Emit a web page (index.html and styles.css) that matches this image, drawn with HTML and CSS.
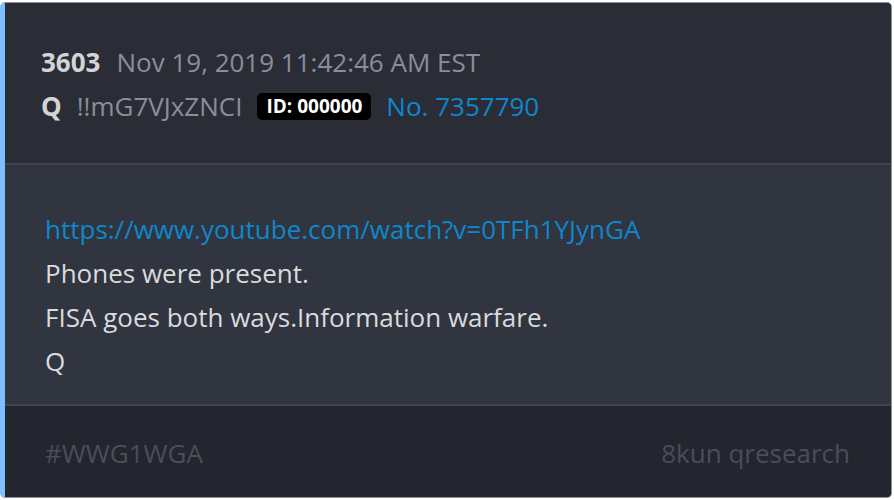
FILE: index.html
```html
<!DOCTYPE html>
<html lang="en">

<head>
    <meta charset="UTF-8">
    <meta name="viewport" content="width=device-width, initial-scale=1.0">
    <title>Post 3603</title>
    <link rel="stylesheet" href="styles.css">
</head>

<body>
    <div class="post">
        <div class="post-head">
            <p class="meta">
                <span class="num">3603</span>
                <span class="date">Nov 19, 2019 11:42:46 AM EST</span>
            </p>
            <p class="meta author">
                <span class="name">Q</span>
                <span class="trip">!!mG7VJxZNCI</span>
                <span class="badge">ID: 000000</span>
                <a class="link" href="#">No. 7357790</a>
            </p>
        </div>
        <div class="post-body">
            <p><a class="link" href="#">https://www.youtube.com/watch?v=0TFh1YJynGA</a></p>
            <p>Phones were present.</p>
            <p>FISA goes both ways.Information warfare.</p>
            <p>Q</p>
        </div>
        <div class="post-foot">
            <span>#WWG1WGA</span>
            <span>8kun qresearch</span>
        </div>
    </div>
</body>

</html>
```

FILE: styles.css
```css
* {
    padding: 0;
    margin: 0;
    box-sizing: border-box;
}

body {
    background-color: #ffffff;
    font-family: "Open Sans", "Noto Sans", sans-serif;
    width: 894px;
    height: 500px;
    padding: 2px 2px 2px 0;
}

.post {
    height: 496px;
    display: flex;
    flex-direction: column;
    border: 1px solid #8c9099;
    border-left: 5px solid #7fbfff;
    border-radius: 5px;
    overflow: hidden;
    background-color: #23262e;
}

.post-head {
    background-color: #2a2d36;
    padding: 37px 36px 33px;
    height: 162px;
    border-bottom: 2px solid #3f434c;
}

.meta {
    display: flex;
    align-items: center;
    gap: 16px;
    line-height: 44px;
    font-size: 26px;
}

.author {
    gap: 15px;
}

.num,
.name {
    font-weight: 700;
    color: #d4d4d6;
}

.date,
.trip {
    color: #8a8e9b;
}

.badge {
    background-color: #000000;
    color: #ffffff;
    font-weight: 700;
    font-size: 19px;
    line-height: 27px;
    padding: 0 9px;
    border-radius: 5px;
}

.link {
    color: #0f87cc;
    text-decoration: none;
}

.post-body {
    background-color: #30353f;
    padding: 42px 40px 18px;
    height: 241px;
    border-bottom: 2px solid #40444d;
    color: #dadbdd;
    font-size: 26px;
    line-height: 44px;
}

.post-foot {
    flex: 1;
    display: flex;
    justify-content: space-between;
    align-items: center;
    padding: 2px 41px 0 40px;
    font-size: 26px;
    color: #4a4e59;
}
```
